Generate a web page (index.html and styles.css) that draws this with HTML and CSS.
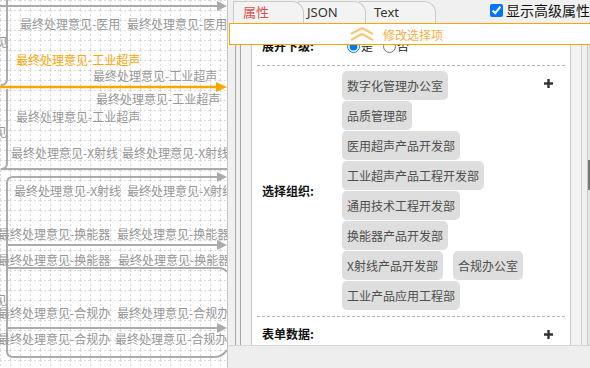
FILE: index.html
```html
<!DOCTYPE html>
<html lang="zh-CN">
  <head>
    <meta charset="UTF-8" />
    <meta name="viewport" content="width=device-width, initial-scale=1.0" />
    <title>流程设计 - 属性</title>
    <link rel="stylesheet" href="styles.css">
  </head>

  <body>
    <div class="app">
      <!-- flow canvas -->
      <div class="canvas">
        <svg class="graph" width="227" height="368" viewBox="0 0 227 368">
          <defs>
            <pattern id="grid" width="10" height="10" patternUnits="userSpaceOnUse">
              <path d="M0 0.5H10M0.5 0V10" stroke="#dcdcdc" stroke-width="1" stroke-dasharray="2 2" fill="none" />
            </pattern>
          </defs>
          <rect width="227" height="368" fill="url(#grid)" />

          <g class="edge" fill="none" stroke="#ababab" stroke-width="2">
            <path d="M0 6H218" />
            <path d="M7 0V79Q7 85 1 85" />
            <path d="M7 89V163Q7 169 1 169H227" />
            <path d="M7 183Q7 177 13 177H218" />
            <path d="M7 183V351Q7 357 13 357H214Q222 357 227 350" />
            <path d="M7 245H218" />
            <path d="M7 268H219Q224 268 227 272" />
            <path d="M7 328H218" />
          </g>
          <g fill="#ababab">
            <polygon points="217,1 227,6 217,11" />
            <polygon points="217,172 227,177 217,182" />
            <polygon points="217,240 227,245 217,250" />
            <polygon points="217,323 227,328 217,333" />
          </g>
          <path d="M0 87H217" stroke="#ffa500" stroke-width="2.5" fill="none" />
          <polygon points="216,82 227,87 216,92" fill="#ffa500" />

          <text x="20" y="28.5">最终处理意见-医用</text>
          <text x="127" y="28.5">最终处理意见-医用</text>
          <text x="8" y="46.5" text-anchor="end">见</text>
          <text class="hot" x="16" y="64.5">最终处理意见-工业超声</text>
          <text x="93" y="80.5">最终处理意见-工业超声</text>
          <text x="96" y="103.5">最终处理意见-工业超声</text>
          <text x="16" y="121.5">最终处理意见-工业超声</text>
          <text x="7" y="136.5" text-anchor="end">见</text>
          <text x="11" y="157.5">最终处理意见-X射线</text>
          <text x="122" y="157.5">最终处理意见-X射线</text>
          <text x="14" y="195.5">最终处理意见-X射线</text>
          <text x="127" y="195.5">最终处理意见-X射线</text>
          <text x="-2" y="238.5">最终处理意见-换能器</text>
          <text x="117" y="238.5">最终处理意见-换能器</text>
          <text x="-2" y="264.5">最终处理意见-换能器</text>
          <text x="118" y="264.5">最终处理意见-换能器</text>
          <text x="7" y="304.5" text-anchor="end">见</text>
          <text x="-2" y="317.5">最终处理意见-合规办</text>
          <text x="117" y="317.5">最终处理意见-合规办</text>
          <text x="-2" y="343.5">最终处理意见-合规办</text>
          <text x="115" y="343.5">最终处理意见-合规办</text>
        </svg>
      </div>

      <!-- property side panel -->
      <div class="side">
        <div class="tabs">
          <div class="tab tab-props">属性</div>
          <div class="tab tab-json">JSON</div>
          <div class="tab tab-text">Text</div>
          <label class="advanced"><input type="checkbox" checked />显示高级属性</label>
        </div>

        <div class="main">
          <div class="frame-outer">
            <div class="frame-mid">
              <div class="panel">
                <div class="row row-expand">
                  <div class="label">展开下级:</div>
                  <div class="choice">
                    <input type="radio" name="expand" checked /><span>是</span>
                    <input type="radio" name="expand" /><span>否</span>
                  </div>
                </div>

                <div class="row row-orgs">
                  <div class="label">选择组织:</div>
                  <div class="tags">
                    <div class="tag-line"><span class="tag">数字化管理办公室</span></div>
                    <div class="tag-line"><span class="tag">品质管理部</span></div>
                    <div class="tag-line"><span class="tag">医用超声产品开发部</span></div>
                    <div class="tag-line"><span class="tag">工业超声产品工程开发部</span></div>
                    <div class="tag-line"><span class="tag">通用技术工程开发部</span></div>
                    <div class="tag-line"><span class="tag">换能器产品开发部</span></div>
                    <div class="tag-line">
                      <span class="tag">X射线产品开发部</span>
                      <span class="tag">合规办公室</span>
                    </div>
                    <div class="tag-line"><span class="tag">工业产品应用工程部</span></div>
                  </div>
                  <div class="add add-top">
                    <svg width="9" height="9" viewBox="0 0 9 9"><path d="M4.5 0V9M0 4.5H9" stroke="#333" stroke-width="2.4" /></svg>
                  </div>
                </div>

                <div class="row row-form">
                  <div class="label">表单数据:</div>
                  <div class="tags"></div>
                  <div class="add">
                    <svg width="9" height="9" viewBox="0 0 9 9"><path d="M4.5 0V9M0 4.5H9" stroke="#333" stroke-width="2.4" /></svg>
                  </div>
                </div>
              </div>
            </div>
          </div>
          <div class="scrollbar"><div class="thumb"></div></div>
        </div>

        <div class="footer"></div>

        <!-- floating bar over the scrolled form -->
        <div class="edit-bar">
          <svg class="chevrons" width="24" height="14" viewBox="0 0 24 14">
            <path d="M1 7L12 1L23 7M1 13L12 7L23 13" fill="none" stroke="#ffc56e" stroke-width="2" />
          </svg>
          修改选择项
        </div>
      </div>
    </div>
  </body>
</html>
```

FILE: styles.css
```css
html,
body {
  margin: 0;
  padding: 0;
  overflow: hidden;
}

body {
  font-family: "Noto Sans", "Noto Sans CJK SC", sans-serif;
  font-size: 12px;
  color: #222;
}

.app {
  display: flex;
  width: 590px;
  height: 368px;
}

/* canvas */

.canvas {
  width: 227px;
  flex-shrink: 0;
  border-right: 1px solid #c4c4c4;
  background-color: #fff;
  overflow: hidden;
}

.graph {
  display: block;
}

.graph text {
  font-family: "Noto Sans CJK SC", sans-serif;
  font-size: 12px;
  fill: #979797;
}

.graph text.hot {
  fill: #ffa500;
}

/* side panel */

.side {
  position: relative;
  flex: 1;
  min-width: 0;
  display: flex;
  flex-direction: column;
  background-color: #f0f0f0;
  overflow: hidden;
}

.tabs {
  display: flex;
  height: 23px;
  padding-left: 5px;
  box-sizing: border-box;
}

.tab {
  position: relative;
  height: 22px;
  margin-top: 1px;
  box-sizing: border-box;
  padding-left: 9px;
  border: 1px solid #c9c9c9;
  border-bottom: none;
  border-top-right-radius: 12px;
  background-color: #f3f3f3;
  line-height: 21px;
  font-size: 13px;
  color: #333;
}

.tab-props {
  width: 71px;
  color: #d9534f;
  z-index: 3;
}

.tab-json {
  width: 68px;
  margin-left: -6px;
  padding-left: 8px;
  z-index: 2;
}

.tab-text {
  width: 77px;
  margin-left: -7px;
  padding-left: 14px;
  z-index: 1;
}

.advanced {
  margin-left: auto;
  display: flex;
  align-items: center;
  height: 20px;
  font-size: 14px;
  color: #111;
  white-space: nowrap;
}

.advanced input {
  width: 13px;
  height: 13px;
  margin: 0 3px 0 0;
}

.main {
  flex: 1;
  min-height: 0;
  display: flex;
  padding-left: 7px;
  overflow: hidden;
}

.frame-outer {
  flex: 1;
  display: flex;
  padding: 0 5px 0 4px;
  border-left: 1px solid #a8a8a8;
  border-right: 1px solid #c8c8c8;
}

.frame-mid {
  flex: 1;
  display: flex;
  padding: 0 10px;
  border-left: 1px solid #a8a8a8;
  border-right: 1px solid #d0d0d0;
  background-color: #f3f3f3;
}

.panel {
  flex: 1;
  border-left: 1px solid #c8c8c8;
  border-right: 1px solid #c8c8c8;
  background-color: #fff;
}

.scrollbar {
  width: 2px;
  background-color: #e6e6e6;
}

.thumb {
  height: 30px;
  margin-top: 137px;
  background-color: #777;
}

.footer {
  height: 23px;
  box-sizing: border-box;
  border-top: 1px solid #d6d6d6;
  background-color: #eee;
}

/* form rows */

.row {
  display: flex;
  align-items: center;
  margin: 0 5px;
  padding-left: 5px;
  border-bottom: 1px dashed #b8b8b8;
}

.row-expand {
  padding-top: 16px;
  padding-bottom: 12px;
  line-height: 14px;
}

.row-orgs {
  padding-top: 5px;
  padding-bottom: 6px;
}

.row-form {
  padding-top: 10px;
  padding-bottom: 10px;
  line-height: 14px;
  border-bottom: none;
}

.label {
  width: 80px;
  flex-shrink: 0;
  font-family: "Noto Sans CJK SC", sans-serif;
  font-weight: bold;
  color: #111;
}

.choice {
  display: flex;
  align-items: center;
  font-family: "Noto Sans CJK SC", sans-serif;
}

.choice input {
  width: 13px;
  height: 13px;
  margin: 0 1px 0 5px;
}

.choice span {
  margin-right: 5px;
}

.tags {
  flex: 1;
  display: flex;
  flex-direction: column;
  align-items: flex-start;
  gap: 1px;
}

.tag-line {
  display: flex;
  gap: 10px;
}

.tag {
  height: 29px;
  padding: 0 5px;
  border-radius: 5px;
  background-color: #dedede;
  line-height: 29px;
  font-family: "Noto Sans CJK SC", sans-serif;
  color: #4d4d4d;
}

.add {
  width: 20px;
  margin-right: 7px;
  display: flex;
  justify-content: center;
}

.add-top {
  align-self: flex-start;
  margin-top: 8px;
}

/* floating edit bar */

.edit-bar {
  position: absolute;
  top: 23px;
  left: 1px;
  right: -2px;
  height: 22px;
  box-sizing: border-box;
  display: flex;
  align-items: center;
  padding-left: 120px;
  border: 1px solid #ffa500;
  background-color: #fff;
  font-family: "Noto Sans CJK SC", sans-serif;
  font-size: 12px;
  color: #f7ad45;
  z-index: 5;
}

.chevrons {
  margin-right: 9px;
}
```
